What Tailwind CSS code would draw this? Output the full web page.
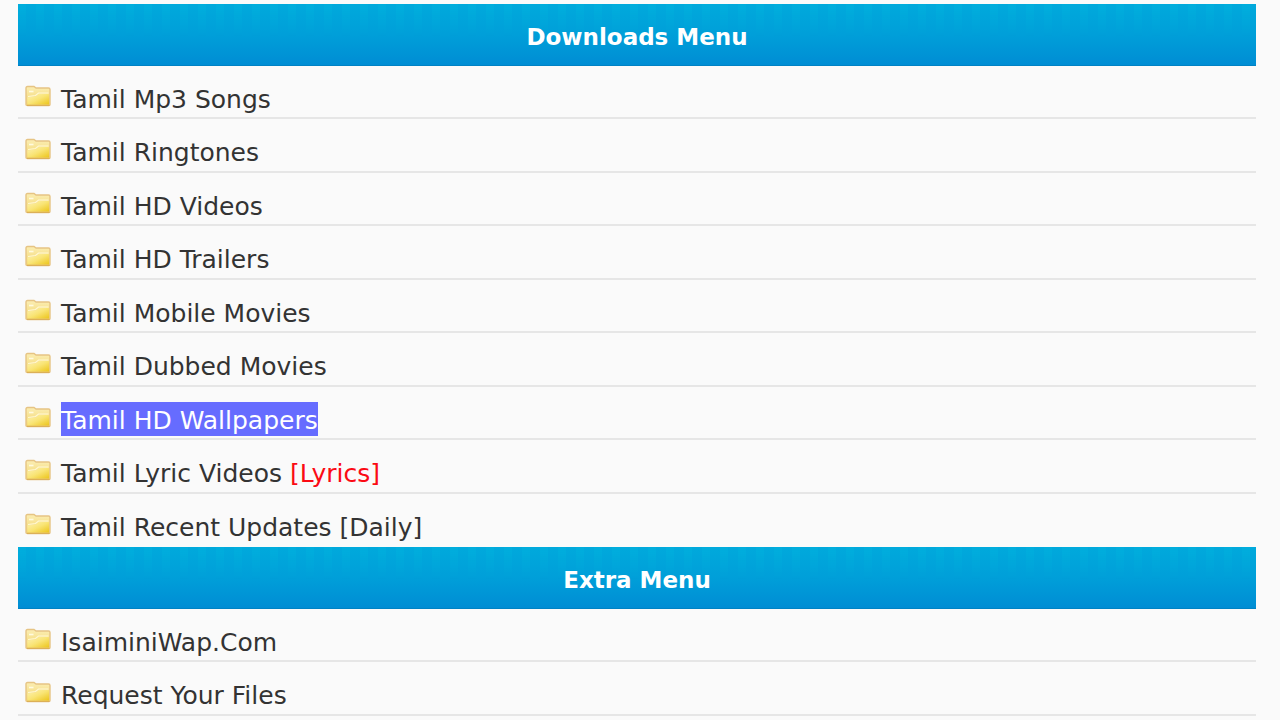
<!DOCTYPE html>
<html lang="en">
  <head>
    <meta charset="UTF-8" />
    <meta name="viewport" content="width=device-width, initial-scale=1.0" />
    <title>Downloads Menu</title>
    <script src="https://cdn.jsdelivr.net/npm/@tailwindcss/browser@4"></script>
  </head>

  <body class="bg-[#fafafa] text-[#333333] font-['DejaVu_Sans',Verdana,sans-serif]">
    <!-- folder icon, reused by every row -->
    <svg class="absolute size-0" aria-hidden="true">
      <defs>
        <linearGradient id="folderBack" x1="0" y1="0" x2="0" y2="1">
          <stop offset="0" stop-color="#fbeeb4" />
          <stop offset="1" stop-color="#f3d469" />
        </linearGradient>
        <linearGradient id="folderFront" x1="0" y1="0" x2="1" y2="1">
          <stop offset="0" stop-color="#fdf2b4" />
          <stop offset="0.5" stop-color="#f9e474" />
          <stop offset="1" stop-color="#ecc51c" />
        </linearGradient>
      </defs>
      <symbol id="folder" viewBox="0 0 26 22">
        <path d="M1 3Q1 1.5 2.5 1.5H9L11 3H23.5Q25 3 25 4.5V19.5Q25 20.5 24 20.5H2.5Q1 20.5 1 19.5Z" fill="url(#folderBack)" stroke="#e6c484" stroke-width="1.4" />
        <path d="M2.5 12.5L11 11.5L14 9H24V19.5H2.5Z" fill="url(#folderFront)" />
        <path d="M3 11.5L10.5 10.5L13.5 8H23.5" fill="none" stroke="#fff8d4" stroke-width="1.2" />
        <path d="M4 6.5H8.5" stroke="#fffae0" stroke-width="1.6" />
        <path d="M2 20.4H24.5" stroke="#dcb057" stroke-width="1.2" />
      </symbol>
    </svg>

    <main class="ml-[18px] mr-6 pt-1">
      <section>
        <h2 class="relative flex h-[62px] items-center justify-center border-b border-[#0082c4] bg-linear-to-b from-[#00a9dc] via-[#009fd9] to-[#008dd4] pt-1.5 text-[23px] font-bold text-white">
          <span class="absolute inset-x-0 top-0 h-8 bg-[repeating-linear-gradient(90deg,#00b4de66_0_8px,transparent_8px_18px)] mask-b-from-10%"></span>
          <span class="relative">Downloads Menu</span>
        </h2>
        <ul class="text-[25px] leading-[34px]">
          <li class="flex h-[53px] items-center border-b-2 border-[#e6e6e6] pl-[7px] even:h-[54px]">
            <svg class="mt-2 mr-2.5 h-[22px] w-[26px]"><use href="#folder" /></svg>
            <a href="#" class="pt-4">Tamil Mp3 Songs</a>
          </li>
          <li class="flex h-[53px] items-center border-b-2 border-[#e6e6e6] pl-[7px] even:h-[54px]">
            <svg class="mt-2 mr-2.5 h-[22px] w-[26px]"><use href="#folder" /></svg>
            <a href="#" class="pt-4">Tamil Ringtones</a>
          </li>
          <li class="flex h-[53px] items-center border-b-2 border-[#e6e6e6] pl-[7px] even:h-[54px]">
            <svg class="mt-2 mr-2.5 h-[22px] w-[26px]"><use href="#folder" /></svg>
            <a href="#" class="pt-4">Tamil HD Videos</a>
          </li>
          <li class="flex h-[53px] items-center border-b-2 border-[#e6e6e6] pl-[7px] even:h-[54px]">
            <svg class="mt-2 mr-2.5 h-[22px] w-[26px]"><use href="#folder" /></svg>
            <a href="#" class="pt-4">Tamil HD Trailers</a>
          </li>
          <li class="flex h-[53px] items-center border-b-2 border-[#e6e6e6] pl-[7px] even:h-[54px]">
            <svg class="mt-2 mr-2.5 h-[22px] w-[26px]"><use href="#folder" /></svg>
            <a href="#" class="pt-4">Tamil Mobile Movies</a>
          </li>
          <li class="flex h-[53px] items-center border-b-2 border-[#e6e6e6] pl-[7px] even:h-[54px]">
            <svg class="mt-2 mr-2.5 h-[22px] w-[26px]"><use href="#folder" /></svg>
            <a href="#" class="pt-4">Tamil Dubbed Movies</a>
          </li>
          <li class="flex h-[53px] items-center border-b-2 border-[#e6e6e6] pl-[7px] even:h-[54px]">
            <svg class="mt-2 mr-2.5 h-[22px] w-[26px]"><use href="#folder" /></svg>
            <a href="#" class="pt-3 text-white"><span class="block bg-[#666cff] pt-1 leading-[30px]">Tamil HD Wallpapers</span></a>
          </li>
          <li class="flex h-[53px] items-center border-b-2 border-[#e6e6e6] pl-[7px] even:h-[54px]">
            <svg class="mt-2 mr-2.5 h-[22px] w-[26px]"><use href="#folder" /></svg>
            <a href="#" class="pt-4">Tamil Lyric Videos <span class="text-[#fb0a14]">[Lyrics]</span></a>
          </li>
          <li class="flex h-[53px] items-center border-b-2 border-transparent pl-[7px] even:h-[54px]">
            <svg class="mt-2 mr-2.5 h-[22px] w-[26px]"><use href="#folder" /></svg>
            <a href="#" class="pt-4">Tamil Recent Updates [Daily]</a>
          </li>
        </ul>
      </section>

      <section>
        <h2 class="relative flex h-[62px] items-center justify-center border-b border-[#0082c4] bg-linear-to-b from-[#00a9dc] via-[#009fd9] to-[#008dd4] pt-1.5 text-[23px] font-bold text-white">
          <span class="absolute inset-x-0 top-0 h-8 bg-[repeating-linear-gradient(90deg,#00b4de66_0_8px,transparent_8px_18px)] mask-b-from-10%"></span>
          <span class="relative">Extra Menu</span>
        </h2>
        <ul class="text-[25px] leading-[34px]">
          <li class="flex h-[53px] items-center border-b-2 border-[#e6e6e6] pl-[7px] even:h-[54px]">
            <svg class="mt-2 mr-2.5 h-[22px] w-[26px]"><use href="#folder" /></svg>
            <a href="#" class="pt-4">IsaiminiWap.Com</a>
          </li>
          <li class="flex h-[53px] items-center border-b-2 border-[#e6e6e6] pl-[7px] even:h-[54px]">
            <svg class="mt-2 mr-2.5 h-[22px] w-[26px]"><use href="#folder" /></svg>
            <a href="#" class="pt-4">Request Your Files</a>
          </li>
        </ul>
      </section>
    </main>
  </body>
</html>
